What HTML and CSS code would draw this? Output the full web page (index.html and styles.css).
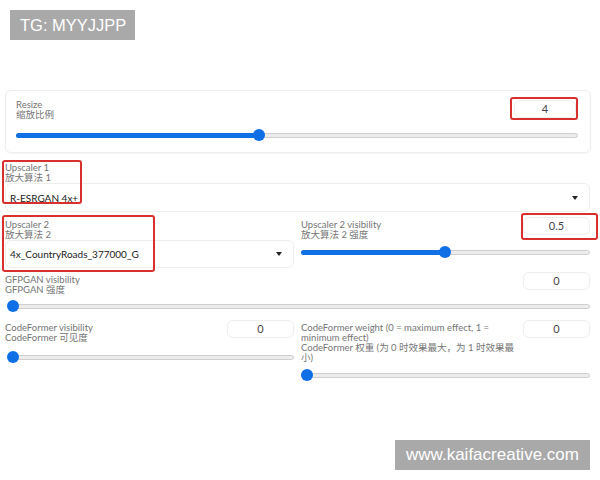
FILE: index.html
```html
<!DOCTYPE html>
<html>
<head>
<meta charset="utf-8">
<link rel="stylesheet" href="styles.css">
</head>
<body>
<div class="page">
  <div class="tg">TG: MYYJJPP</div>

  <div class="card">
    <div class="head">
      <div class="label"><div>Resize</div><div>缩放比例</div></div>
      <div class="num num-resize">4</div>
    </div>
    <div class="slider"><div class="track"></div><div class="fill" style="width:243px"></div><div class="thumb" style="left:237px"></div></div>
  </div>

  <div class="block b-up1">
    <div class="label"><div>Upscaler 1</div><div>放大算法 1</div></div>
    <div class="dropdown"><span>R-ESRGAN 4x+</span><i class="caret"></i></div>
  </div>

  <div class="row r-up2">
    <div class="col">
      <div class="label"><div>Upscaler 2</div><div>放大算法 2</div></div>
      <div class="dropdown dd2"><span>4x_CountryRoads_377000_G</span><i class="caret"></i></div>
    </div>
    <div class="col">
      <div class="head">
        <div class="label"><div>Upscaler 2 visibility</div><div>放大算法 2 强度</div></div>
        <div class="num">0.5</div>
      </div>
      <div class="slider s-vis"><div class="track"></div><div class="fill" style="width:144px"></div><div class="thumb" style="left:138px"></div></div>
    </div>
  </div>

  <div class="block b-gfp">
    <div class="head">
      <div class="label"><div>GFPGAN visibility</div><div>GFPGAN 强度</div></div>
      <div class="num">0</div>
    </div>
    <div class="slider s-gfp"><div class="track"></div><div class="thumb" style="left:0px"></div></div>
  </div>

  <div class="row r-cf">
    <div class="col">
      <div class="head">
        <div class="label"><div>CodeFormer visibility</div><div>CodeFormer 可见度</div></div>
        <div class="num">0</div>
      </div>
      <div class="slider s-cfv"><div class="track"></div><div class="thumb" style="left:0px"></div></div>
    </div>
    <div class="col">
      <div class="head">
        <div class="label wide"><div>CodeFormer weight (0 = maximum effect, 1 = minimum effect)</div><div>CodeFormer 权重 (为 0 时效果最大，为 1 时效果最小)</div></div>
        <div class="num">0</div>
      </div>
      <div class="slider s-cfw"><div class="track"></div><div class="thumb" style="left:0px"></div></div>
    </div>
  </div>

  <div class="mark m-resize"></div>
  <div class="mark m-up1"></div>
  <div class="mark m-up2"></div>
  <div class="mark m-vis"></div>

  <div class="wm">www.kaifacreative.com</div>
</div>
</body>
</html>
```

FILE: styles.css
```css
* { box-sizing: border-box; }
html, body { margin: 0; padding: 0; background: #fff; }
body { width: 600px; height: 480px; overflow: hidden; font-family: "Lato", "Noto Sans CJK SC", sans-serif; }
.page { position: relative; width: 600px; height: 480px; padding-top: 10px; }

.tg {
  margin: 0 0 0 10px;
  width: 125px; height: 30px;
  background: #a9a9a9; color: #fff;
  font-family: "Liberation Sans", "DejaVu Sans", sans-serif;
  font-size: 16.5px; line-height: 30px;
  padding-left: 10px;
}

.card {
  margin: 50px 0 0 5px;
  width: 586px; height: 63px;
  border: 1px solid #eeeeee;
  border-radius: 6px;
  padding: 9px 12px 0 10px;
  box-shadow: 0 1px 2px rgba(0,0,0,0.04);
}

.label { font-size: 9.5px; line-height: 10px; color: #757575; }
.label div { white-space: nowrap; }
.label.wide div { white-space: normal; }
.label.wide { width: 218px; }

.head { display: flex; justify-content: space-between; align-items: flex-start; }

.num {
  width: 67px; height: 18px;
  border: 1px solid #eeeeee; border-radius: 6px;
  text-align: center; font-size: 11px; line-height: 16px; color: #444;
  margin-top: -3px;
}
.card .num { margin-top: 0; width: 62px; margin-right: 2px; }

.slider { position: relative; height: 12px; }
.track {
  position: absolute; left: 0; right: 0; top: 3.5px; height: 5px;
  background: #ececec; border: 1px solid #cfcfcf; border-radius: 3px;
}
.fill {
  position: absolute; left: 0; top: 3.5px; height: 5px;
  background: #1170e6; border-radius: 3px;
}
.thumb {
  position: absolute; top: 0; width: 12px; height: 12px;
  border-radius: 50%; background: #0f6fe6;
}
.card .slider { margin-top: 9px; }

.block { margin-left: 5px; width: 585px; }
.b-up1 { margin-top: 10px; }
.dropdown {
  height: 29px; border: 1px solid #eeeeee; border-radius: 6px;
  display: flex; align-items: center; justify-content: space-between;
  padding: 0 11px 0 4px;
  font-size: 10px; color: #222;
  font-family: "Lato", "Noto Sans", sans-serif;
}
.caret {
  width: 0; height: 0;
  border-left: 3.5px solid transparent; border-right: 3.5px solid transparent;
  border-top: 4px solid #222;
}

.row { display: flex; gap: 7px; margin-left: 5px; width: 585px; }
.col { flex: 1; }
.r-up2 { margin-top: 8px; }
.dd2 { height: 28px; }
.s-vis { margin-top: 6px; }

.b-gfp { margin-top: 7px; }
.s-gfp { margin-top: 5px; margin-left: 2px; }

.r-cf { margin-top: 11px; }
.s-cfv { margin-top: 8px; margin-left: 2px; }
.s-cfw { margin-top: 6px; }

.mark {
  position: absolute; border: 2px solid #d8302c; border-radius: 3px;
}
.m-resize { left: 510px; top: 97px; width: 68px; height: 23px; }
.m-up1 { left: 2px; top: 160px; width: 80px; height: 44px; }
.m-up2 { left: 2px; top: 215px; width: 153px; height: 57px; }
.m-vis { left: 521px; top: 213px; width: 77px; height: 27px; }

.wm {
  position: absolute; left: 395px; top: 440px; width: 195px; height: 30px;
  background: #a9a9a9; color: #fff;
  font-family: "Liberation Sans", "DejaVu Sans", sans-serif;
  font-size: 17px; line-height: 30px; text-align: center;
}
```
